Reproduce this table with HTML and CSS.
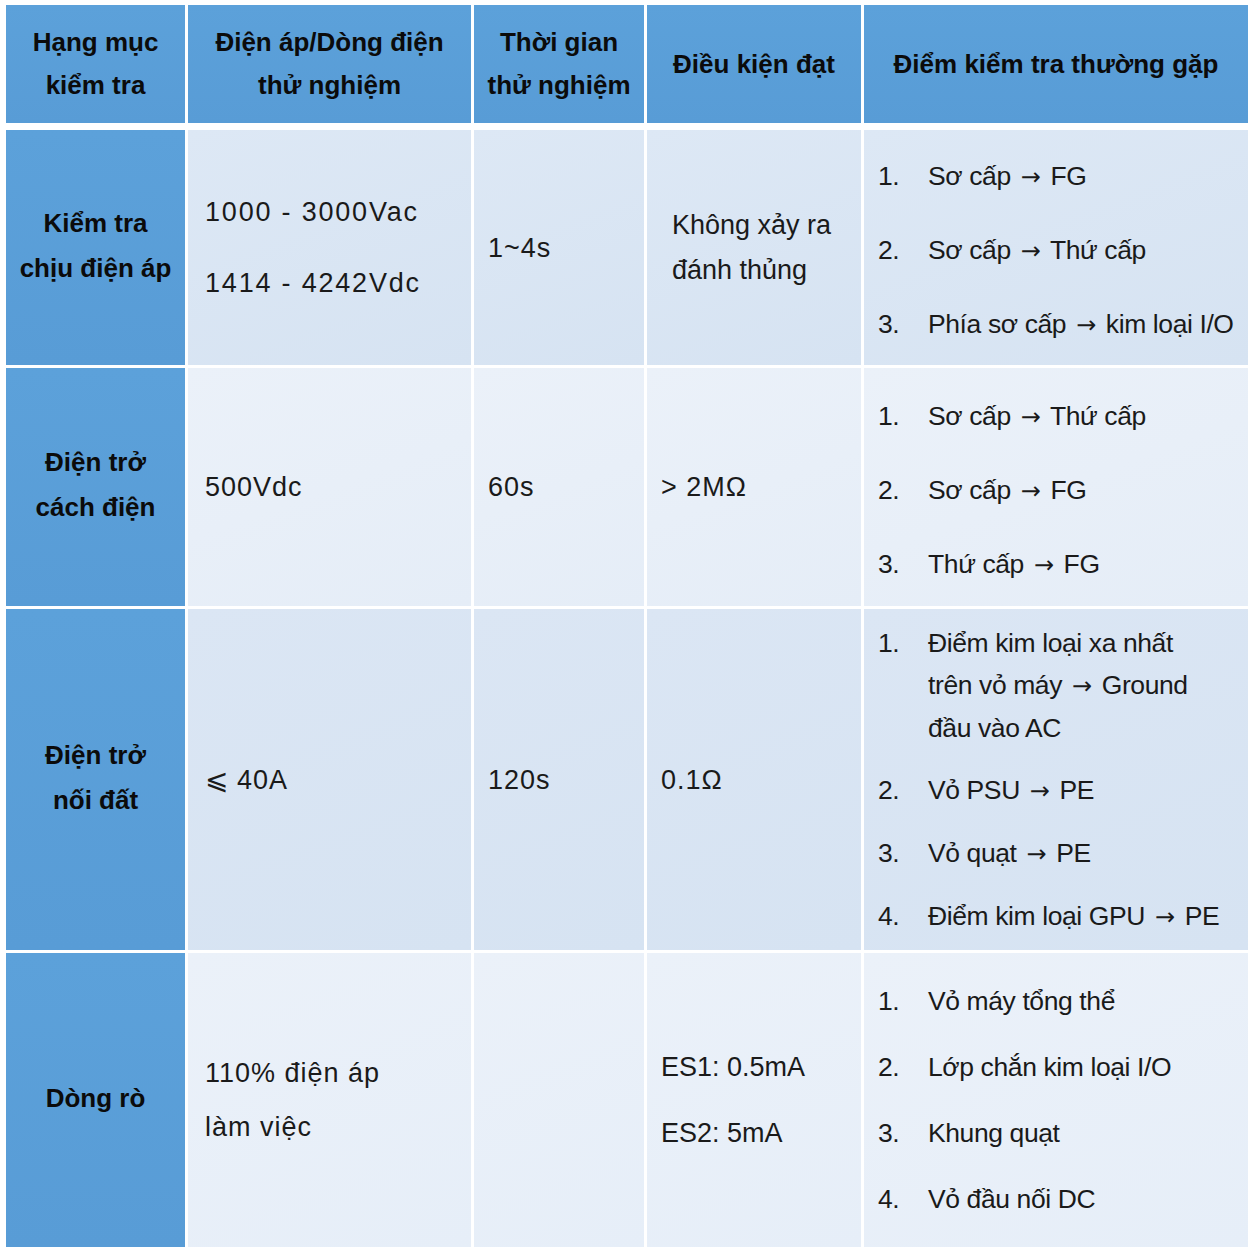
FILE: index.html
```html
<!DOCTYPE html>
<html lang="vi">
<head>
<meta charset="utf-8">
<title>Bảng kiểm tra an toàn</title>
<link rel="stylesheet" href="styles.css">
</head>
<body>
<div class="table">
  <div class="grid head">
    <div class="hcell"><span>Hạng mục<br>kiểm tra</span></div>
    <div class="hcell"><span>Điện áp/Dòng điện<br>thử nghiệm</span></div>
    <div class="hcell"><span>Thời gian<br>thử nghiệm</span></div>
    <div class="hcell"><span>Điều kiện đạt</span></div>
    <div class="hcell"><span>Điểm kiểm tra thường gặp</span></div>
  </div>
  <div class="grid body">
    <div class="label"><span>Kiểm tra<br>chịu điện áp</span></div>
    <div class="cell r1 c2 digits wide"><div class="lines gap-xl"><div>1000 - 3000Vac</div><div>1414 - 4242Vdc</div></div></div>
    <div class="cell r1 c3 digits"><div>1~4s</div></div>
    <div class="cell r1 c4 wide-pad"><div class="lines tight"><div>Không xảy ra</div><div>đánh thủng</div></div></div>
    <div class="cell r1 c5 nudge">
      <ol class="list gap-l">
        <li><span class="num">1.</span><span>Sơ cấp <span class="arr">→</span> FG</span></li>
        <li><span class="num">2.</span><span>Sơ cấp <span class="arr">→</span> Thứ cấp</span></li>
        <li><span class="num">3.</span><span>Phía sơ cấp <span class="arr">→</span> kim loại I/O</span></li>
      </ol>
    </div>

    <div class="label"><span>Điện trở<br>cách điện</span></div>
    <div class="cell r2 c2 digits"><div>500Vdc</div></div>
    <div class="cell r2 c3 digits"><div>60s</div></div>
    <div class="cell r2 c4 digits"><div>&gt; 2MΩ</div></div>
    <div class="cell r2 c5 nudge">
      <ol class="list gap-l">
        <li><span class="num">1.</span><span>Sơ cấp <span class="arr">→</span> Thứ cấp</span></li>
        <li><span class="num">2.</span><span>Sơ cấp <span class="arr">→</span> FG</span></li>
        <li><span class="num">3.</span><span>Thứ cấp <span class="arr">→</span> FG</span></li>
      </ol>
    </div>

    <div class="label"><span>Điện trở<br>nối đất</span></div>
    <div class="cell r3 c2 digits"><div><span class="leq">⩽</span> 40A</div></div>
    <div class="cell r3 c3 digits"><div>120s</div></div>
    <div class="cell r3 c4 digits"><div>0.1Ω</div></div>
    <div class="cell r3 c5">
      <ol class="list gap-s">
        <li><span class="num">1.</span><span>Điểm kim loại xa nhất<br>trên vỏ máy <span class="arr">→</span> Ground<br>đầu vào AC</span></li>
        <li><span class="num">2.</span><span>Vỏ PSU <span class="arr">→</span> PE</span></li>
        <li><span class="num">3.</span><span>Vỏ quạt <span class="arr">→</span> PE</span></li>
        <li><span class="num">4.</span><span>Điểm kim loại GPU <span class="arr">→</span> PE</span></li>
      </ol>
    </div>

    <div class="label"><span>Dòng rò</span></div>
    <div class="cell r4 c2 digits"><div class="lines gap-m"><div>110% điện áp</div><div>làm việc</div></div></div>
    <div class="cell r4 c3"></div>
    <div class="cell r4 c4"><div class="lines gap-m2"><div>ES1: 0.5mA</div><div>ES2: 5mA</div></div></div>
    <div class="cell r4 c5">
      <ol class="list gap-m2">
        <li><span class="num">1.</span><span>Vỏ máy tổng thể</span></li>
        <li><span class="num">2.</span><span>Lớp chắn kim loại I/O</span></li>
        <li><span class="num">3.</span><span>Khung quạt</span></li>
        <li><span class="num">4.</span><span>Vỏ đầu nối DC</span></li>
      </ol>
    </div>
  </div>
</div>
</body>
</html>
```

FILE: styles.css
```css
html, body {
  margin: 0;
  padding: 0;
  background: #ffffff;
}

body {
  font-family: "Liberation Sans", Arial, sans-serif;
  color: #1c1c1c;
}

.table {
  margin: 5px 0 0 6px;
  width: 1242px;
}

.grid {
  display: grid;
  grid-template-columns: 179px 283px 170px 214px 384px;
  column-gap: 3px;
}

.head {
  grid-template-rows: 118px;
}

.body {
  margin-top: 7px;
  row-gap: 3px;
  grid-template-rows: 235px 238px 341px 294px;
}

.hcell,
.label {
  display: flex;
  align-items: center;
  justify-content: center;
  text-align: center;
  white-space: nowrap;
  background: linear-gradient(180deg, #5ca1da 0%, #589cd6 100%);
  color: #0b0b0b;
  font-weight: 700;
  font-size: 26px;
}

.hcell {
  line-height: 43px;
}

.label {
  line-height: 45px;
  padding-bottom: 4px;
  box-sizing: border-box;
}

.cell {
  display: flex;
  align-items: center;
  white-space: nowrap;
  font-size: 27px;
  line-height: 42px;
  color: #1a1a1a;
  box-sizing: border-box;
}

.cell.digits {
  letter-spacing: 1px;
}

.cell.digits.wide {
  letter-spacing: 1.8px;
}

.cell.nudge {
  padding-top: 6px;
}

.r1 { background: linear-gradient(160deg, #dde8f5 0%, #d6e3f2 100%); }
.r2 { background: linear-gradient(160deg, #ebf1f9 0%, #e5edf7 100%); }
.r3 { background: linear-gradient(160deg, #dbe6f4 0%, #d6e3f2 100%); }
.r4 { background: linear-gradient(160deg, #ebf1f9 0%, #e6eef8 100%); }

.c2 { padding-left: 17px; }
.c3 { padding-left: 14px; }
.c4 { padding-left: 14px; }
.c4.wide-pad { padding-left: 25px; }
.c5 { padding-left: 14px; }

.lines {
  display: flex;
  flex-direction: column;
}

.lines.tight { gap: 3px; }
.lines.gap-xl { gap: 29px; }
.lines.gap-m { gap: 12px; }
.lines.gap-m2 { gap: 24px; }

.leq {
  font-family: "DejaVu Sans", sans-serif;
  font-size: 28px;
  letter-spacing: 0;
}

.list {
  list-style: none;
  margin: 0;
  padding: 0;
  display: flex;
  flex-direction: column;
  font-size: 26.5px;
  letter-spacing: -0.4px;
}

.list.gap-l { gap: 31px; }
.list.gap-s { gap: 20px; }
.list.gap-m2 { gap: 24px; }

.list li {
  display: flex;
}

.num {
  flex: 0 0 50px;
}

.arr {
  font-family: "DejaVu Sans", sans-serif;
  font-size: 24px;
  margin: 0 3px;
}
```
